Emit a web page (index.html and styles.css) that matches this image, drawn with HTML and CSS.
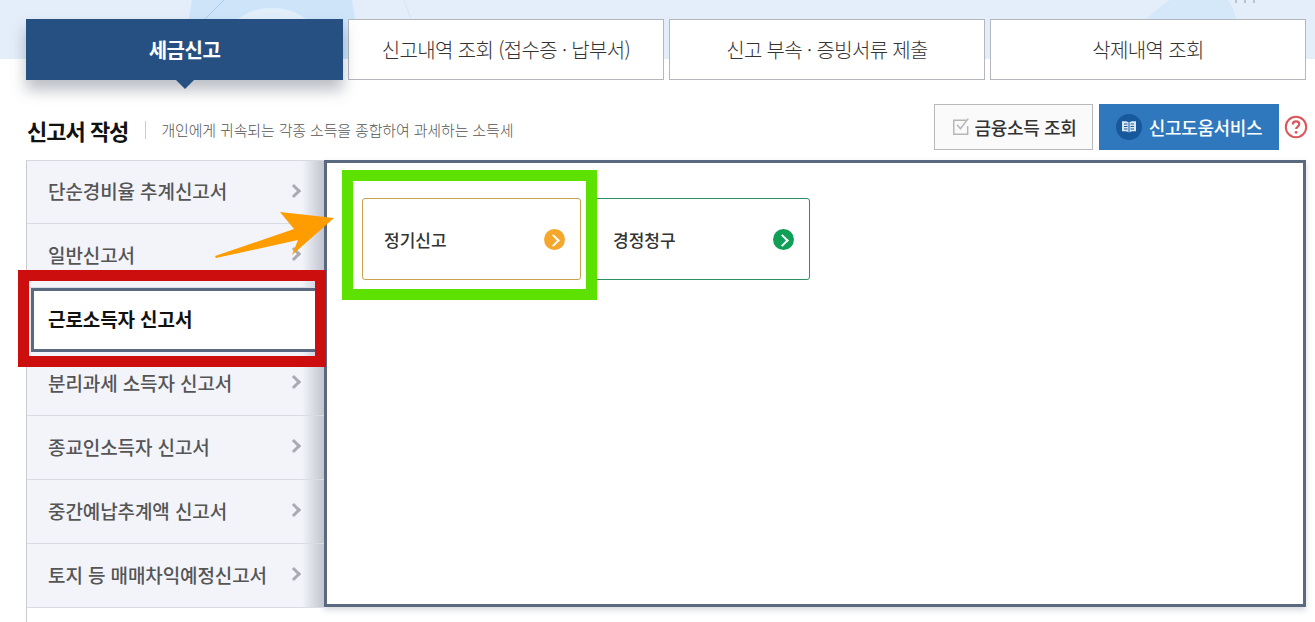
FILE: index.html
```html
<!DOCTYPE html>
<html lang="ko">
<head>
  <meta charset="UTF-8">
  <title>신고서 작성</title>
  <link rel="stylesheet" href="styles.css">
</head>
<body>
<div class="page">
  <svg class="top-bg" width="1315" height="59" viewBox="0 0 1315 59">
    <rect width="1315" height="59" fill="#e4eefa"/>
    <polygon points="192,0 352,0 362,59 182,59" fill="#cde4f9"/>
    <ellipse cx="272" cy="38" rx="44" ry="30" fill="#e2effb"/>
    <path d="M224 0 L204 20" stroke="#a9cdee" stroke-width="1" fill="none"/>
    <path d="M404 0 L412 22" stroke="#d2e3f6" stroke-width="1" fill="none"/>
    <path d="M1170 0 L1228 0 C1233 8 1238 14 1242 59 L1120 59 C1135 30 1150 12 1170 0 Z" fill="#d5e8fa"/>
    <path d="M1236 0v3M1245 0v3M1254 0v3" stroke="#b9c2cc" stroke-width="2" fill="none"/>
  </svg>

  <nav class="tabs">
    <a class="tab active">세금신고</a>
    <a class="tab">신고내역 조회 (접수증 · 납부서)</a>
    <a class="tab">신고 부속 · 증빙서류 제출</a>
    <a class="tab">삭제내역 조회</a>
  </nav>

  <div class="title-row">
    <h2 class="title">신고서 작성</h2>
    <span class="subtitle">개인에게 귀속되는 각종 소득을 종합하여 과세하는 소득세</span>
    <div class="actions">
      <button class="btn-finance">
        <svg width="20" height="20" viewBox="0 0 18 18"><path d="M14 3H2.500v12.500H15V8" fill="none" stroke="#b5b5b5" stroke-width="1.300"/><path d="M5.500 7l3 3.600L15.500 1.500" fill="none" stroke="#b5b5b5" stroke-width="1.300"/></svg>
        금융소득 조회
      </button>
      <button class="btn-help">
        <span class="book">
          <svg width="16" height="14" viewBox="0 0 16 14"><path d="M8 2.500C6.500 1.300 4 1 1 1.300v10c3-.3 5.500 0 7 1.200 1.500-1.200 4-1.500 7-1.200v-10C12 1 9.500 1.300 8 2.500Z" fill="#dbe9f6"/><path d="M8 2.500v10M3 4h3.500M3 6.500h3.500M3 9h3.500M9.500 4H13M9.500 6.500H13M9.500 9H13" stroke="#17599c" stroke-width="1" fill="none"/></svg>
        </span>
        신고도움서비스
      </button>
      <svg class="help-icon" width="24" height="24" viewBox="0 0 24 24"><circle cx="12" cy="12" r="10.200" fill="#fff" stroke="#d9565b" stroke-width="2"/><path d="M8.800 9.500c0-2 1.400-3.200 3.300-3.200s3.200 1.200 3.200 2.800c0 2.400-3.200 2.500-3.200 5" fill="none" stroke="#d9565b" stroke-width="2.200"/><circle cx="12.100" cy="17.300" r="1.400" fill="#d9565b"/></svg>
    </div>
  </div>

  <div class="content">
    <ul class="side-menu">
      <li class="side-item">단순경비율 추계신고서<i class="chev"></i></li>
      <li class="side-item">일반신고서<i class="chev"></i></li>
      <li class="side-item current">근로소득자 신고서</li>
      <li class="side-item">분리과세 소득자 신고서<i class="chev"></i></li>
      <li class="side-item">종교인소득자 신고서<i class="chev"></i></li>
      <li class="side-item">중간예납추계액 신고서<i class="chev"></i></li>
      <li class="side-item">토지 등 매매차익예정신고서<i class="chev"></i></li>
    </ul>
    <div class="panel">
      <a class="card card-orange">정기신고<i class="dot"></i></a>
      <a class="card card-green">경정청구<i class="dot"></i></a>
    </div>
  </div>

  <!-- annotations drawn on top of the screenshot -->
  <div class="mark mark-red"></div>
  <div class="mark mark-green"></div>
  <svg class="mark-arrow" width="130" height="52" viewBox="0 0 130 52"><polygon points="0,46 79,19 65,2 119,8 77,45 83,30 1,48" fill="#ff9c00"/></svg>
</div>
</body>
</html>
```

FILE: styles.css
```css
* {
  box-sizing: border-box;
}
html, body {
  margin: 0;
  padding: 0;
  background: #fff;
  height: 100%;
  overflow: hidden;
}
body {
  font-family: "Noto Sans CJK KR", "Noto Sans", sans-serif;
  color: #333;
}
.page {
  position: relative;
  width: 1315px;
  height: 622px;
  padding: 19px 9px 0 26px;
  overflow: hidden;
}
.top-bg {
  position: absolute;
  top: 0;
  left: 0;
}

/* tabs */
.tabs {
  position: relative;
  display: flex;
  gap: 5px;
  height: 61px;
}
.tab {
  flex: 1;
  display: flex;
  align-items: center;
  justify-content: center;
  background: #fff;
  border: 1px solid #b4b8be;
  font-size: 20px;
  font-weight: 300;
  letter-spacing: -0.650px;
  color: #333;
}
.tab.active {
  position: relative;
  flex: none;
  width: 317px;
  background: #265082;
  border: 0;
  color: #fff;
  font-weight: 700;
  letter-spacing: -0.500px;
  box-shadow: 0 10px 14px rgba(60, 70, 90, 0.35);
}
.tab.active::after {
  content: "";
  position: absolute;
  top: 100%;
  left: 150px;
  border-top: 9px solid #265082;
  border-left: 9px solid transparent;
  border-right: 9px solid transparent;
}

/* title row */
.title-row {
  display: flex;
  align-items: center;
  height: 46px;
  margin-top: 24px;
}
.title {
  margin: 6px 0 0 1px;
  padding-right: 17px;
  font-size: 22px;
  font-weight: 700;
  letter-spacing: -1px;
  color: #111;
}
.subtitle {
  margin-top: 6px;
  padding-left: 15px;
  border-left: 1px solid #ccc;
  font-size: 15px;
  line-height: 18px;
  font-weight: 300;
  letter-spacing: -0.150px;
  color: #555;
}
.actions {
  display: flex;
  align-items: center;
  gap: 6px;
  margin-left: auto;
  margin-right: -2px;
}
.actions button {
  display: flex;
  align-items: center;
  justify-content: center;
  height: 46px;
  font-family: inherit;
  font-size: 18px;
  font-weight: 500;
  letter-spacing: -0.350px;
}
.btn-finance {
  width: 159px;
  gap: 4px;
  background: #fafafa;
  border: 1px solid #b9b9b9;
  color: #333;
}
.btn-help {
  width: 180px;
  gap: 7px;
  background: #2f78bd;
  border: 0;
  color: #fff;
}
.book {
  display: flex;
  align-items: center;
  justify-content: center;
  width: 26px;
  height: 26px;
  border-radius: 50%;
  background: #17599c;
}
.help-icon {
  margin-left: -1px;
}

/* side menu + panel */
.content {
  display: flex;
  height: 447px;
  margin-top: 10px;
}
.side-menu {
  position: relative;
  width: 298px;
  margin: 0;
  padding: 0;
  list-style: none;
  background: #f2f4fa;
  border-left: 1px solid #c9ccd2;
  border-top: 1px solid #d6d9df;
}
.side-menu::before {
  content: "";
  position: absolute;
  top: 0;
  bottom: 0;
  right: 0;
  width: 22px;
  background: linear-gradient(to right, rgba(120, 125, 140, 0), rgba(120, 125, 140, 0.4));
}
.side-menu::after {
  content: "";
  position: absolute;
  top: 100%;
  left: -1px;
  height: 16px;
  border-left: 1px solid #c9ccd2;
}
.side-item {
  position: relative;
  display: flex;
  align-items: center;
  justify-content: space-between;
  height: 64px;
  padding: 0 25px 3px 21px;
  border-bottom: 1px solid #d9dce3;
  font-size: 19px;
  font-weight: 500;
  letter-spacing: -0.100px;
  color: #555;
}
.side-item:first-child {
  height: 63px;
}
.side-item.current {
  margin: 0 8px 0 4px;
  padding-left: 14px;
  background: #fff;
  border: 3px solid #5a6880;
  border-right: 0;
  color: #111;
  font-weight: 700;
}
.chev {
  width: 10px;
  height: 10px;
  border-top: 3.500px solid #a8abb3;
  border-right: 3.500px solid #a8abb3;
  transform: rotate(45deg);
}
.panel {
  display: flex;
  align-items: flex-start;
  gap: 10px;
  flex: 1;
  padding: 35px 0 0 35px;
  background: #fff;
  border: 3px solid #5a6880;
  box-shadow: 0 3px 6px rgba(90, 100, 120, 0.25);
}
.card {
  display: flex;
  align-items: center;
  justify-content: space-between;
  width: 219px;
  height: 82px;
  padding: 0 15px 0 21px;
  border: 1px solid;
  border-radius: 3px;
  font-size: 17px;
  font-weight: 500;
  color: #333;
  background: #fff;
}
.card-orange {
  border-color: #c9a24e;
}
.card-green {
  border-color: #2f8f63;
}
.dot {
  position: relative;
  width: 21px;
  height: 21px;
  border-radius: 50%;
}
.dot::after {
  content: "";
  position: absolute;
  top: 7px;
  left: 5px;
  width: 7px;
  height: 7px;
  border-top: 2px solid #fff;
  border-right: 2px solid #fff;
  transform: rotate(45deg);
}
.card-orange .dot {
  background: #f5a72c;
}
.card-green .dot {
  background: #0f9f57;
}

/* annotations */
.mark {
  position: absolute;
  border: 11px solid;
}
.mark-red {
  top: 270px;
  left: 18px;
  width: 308px;
  height: 97px;
  border-color: #cc0e0e;
}
.mark-green {
  top: 170px;
  left: 342px;
  width: 255px;
  height: 130px;
  border-color: #5ce100;
}
.mark-arrow {
  position: absolute;
  top: 210px;
  left: 215px;
}
```
